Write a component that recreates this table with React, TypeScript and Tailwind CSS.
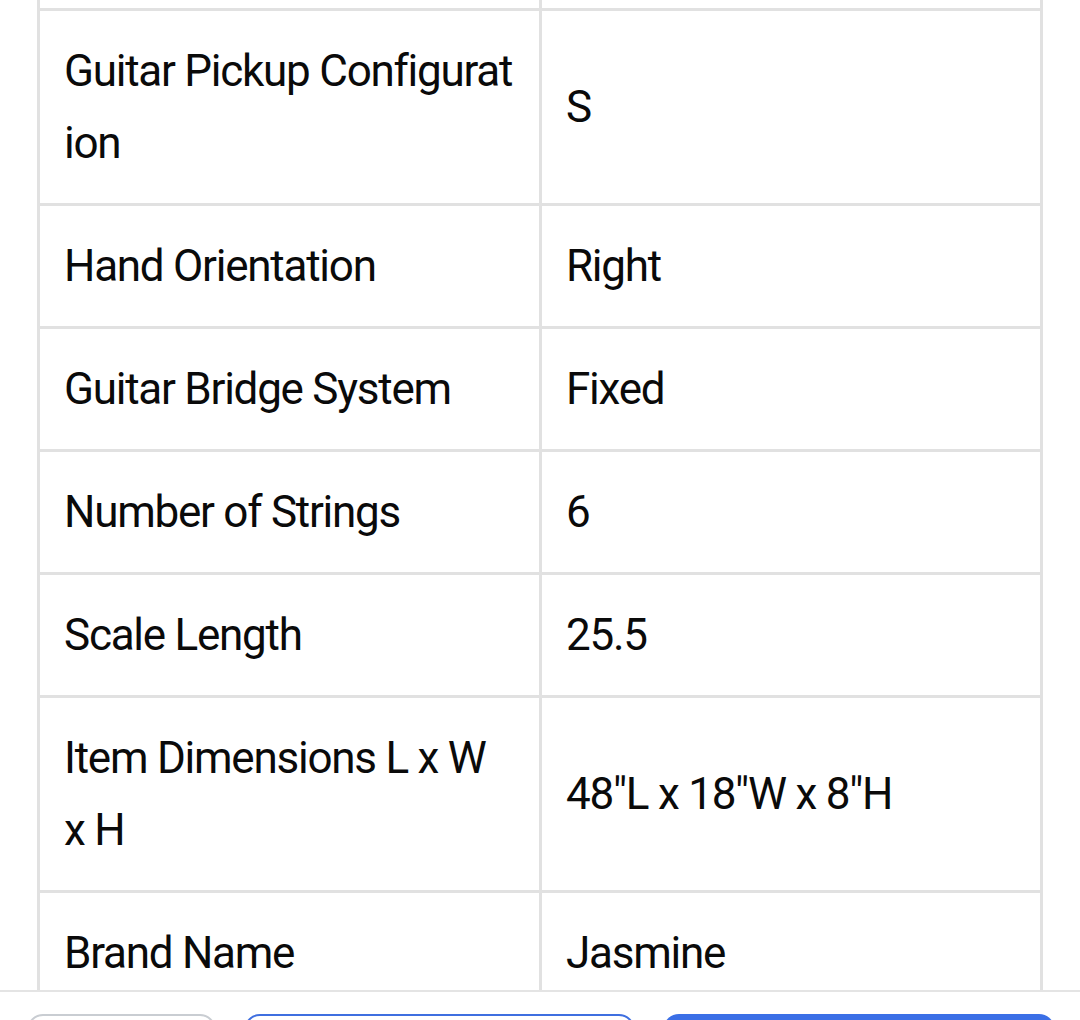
import React from "react";

type Row = { label: React.ReactNode; value: string };

const rows: Row[] = [
  {
    label: (
      <>
        Guitar Pickup Configurat
        <br />
        ion
      </>
    ),
    value: "S",
  },
  { label: "Hand Orientation", value: "Right" },
  { label: "Guitar Bridge System", value: "Fixed" },
  { label: "Number of Strings", value: "6" },
  { label: "Scale Length", value: "25.5" },
  {
    label: (
      <>
        Item Dimensions L x W
        <br />x H
      </>
    ),
    value: '48"L x 18"W x 8"H',
  },
  { label: "Brand Name", value: "Jasmine" },
];

export default function App() {
  return (
    <div
      className="flex h-[1020px] w-[1080px] flex-col overflow-hidden bg-white text-[#0a0a0a]"
      style={{ fontFamily: "Roboto, 'Noto Sans', sans-serif" }}
    >
      <div className="min-h-0 flex-1 overflow-hidden">
        <div className="ml-[37px] w-[1006px] border-x-[3px] border-[#e1e1e1]">
          <div className="grid grid-cols-[502px_498px] border-b-[3px] border-[#e1e1e1]">
            <div className="h-[8px] border-r-[3px] border-[#e1e1e1]" />
            <div className="h-[8px]" />
          </div>
          {rows.map((r, i) => (
            <div
              key={i}
              className="grid grid-cols-[502px_498px] border-b-[3px] border-[#e1e1e1]"
            >
              <div className="flex items-center whitespace-nowrap border-r-[3px] border-[#e1e1e1] pl-[24px] pr-[25px] py-[24px] text-[44px] leading-[72px] tracking-[-1.25px]">
                <div>{r.label}</div>
              </div>
              <div className="flex items-center whitespace-nowrap pl-[24px] pr-[25px] py-[24px] text-[44px] leading-[72px] tracking-[-1.25px]">
                {r.value}
              </div>
            </div>
          ))}
        </div>
      </div>
      <div className="h-[30px] shrink-0 overflow-hidden border-t-2 border-[#e4e4e4] bg-white">
        <div className="flex gap-[28px] pl-[27px] pr-[25px] pt-[22px]">
          <div className="h-[110px] w-[189px] shrink-0 rounded-[16px] border-2 border-[#c9cdd2] bg-white" />
          <div className="h-[110px] w-[391px] shrink-0 rounded-[16px] border-2 border-[#3f6fe0] bg-white" />
          <div className="h-[110px] w-[392px] shrink-0 rounded-[16px] bg-[#3b6fe6]" />
        </div>
      </div>
    </div>
  );
}
